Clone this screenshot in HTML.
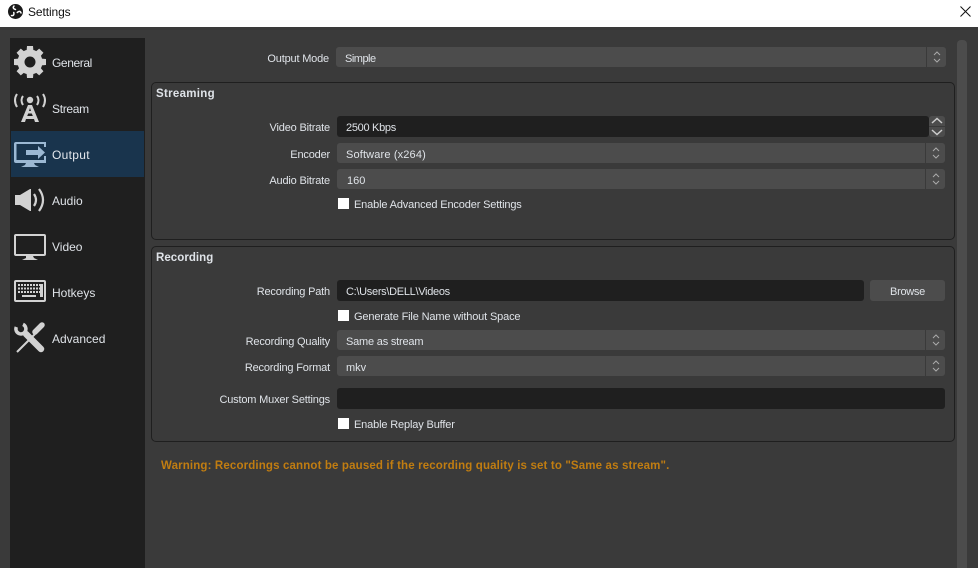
<!DOCTYPE html>
<html><head><meta charset="utf-8"><style>
html,body{margin:0;padding:0}
body{width:978px;height:568px;overflow:hidden;position:relative;background:#3a3a3a;font-family:"Liberation Sans",sans-serif;font-size:11px;color:#dfe3e8}
div{position:absolute;box-sizing:border-box;white-space:nowrap}
svg{position:absolute;overflow:visible}
.l{right:648px;text-align:right;line-height:16px;letter-spacing:-.18px;margin-top:1px}
.sel{background:#4c4c4c;border-radius:3px;height:20px;left:337px;width:608px;line-height:24px;padding-left:9px}
.sel .a{position:absolute;right:0;top:0;width:20px;height:20px;border-left:1px solid #3a3a3a}
.sel svg{left:5px;top:3px}
.inp{background:#1f1f1f;border-radius:3px;line-height:24px;padding-left:9px;height:21px;letter-spacing:-.3px}
.g{left:151px;width:804px;border:1px solid #1f1f1f;border-radius:5px}
.gt{left:156px;font-weight:bold;line-height:16px;font-size:11.5px}
.cb{left:338px;width:11px;height:11px;background:#fff}
.ct{left:354px;line-height:16px;letter-spacing:-.15px;margin-top:1px}
.nav{left:52px;line-height:16px;font-size:12px}
</style></head><body>
<div style="left:0;top:0;width:978px;height:27px;background:#fff"></div>
<svg style="left:7.500px;top:4px" width="15" height="15" viewBox="0 0 15 15"><circle cx="7.500" cy="7.500" r="7.500" fill="#1a1a1a"/><g fill="none" stroke="#fff" stroke-width="1.500" stroke-linecap="round"><path d="M7.500 5.500C5.500 5 4.500 3.500 6 2"/><path d="M7.500 5.500C5.500 5 4.500 3.500 6 2" transform="rotate(120 7.500 7.500)"/><path d="M7.500 5.500C5.500 5 4.500 3.500 6 2" transform="rotate(240 7.500 7.500)"/></g></svg>
<div style="left:28px;top:4px;color:#111;font-size:12px;line-height:16px;letter-spacing:-.1px">Settings</div>
<svg style="left:960px;top:6px" width="11" height="11"><path d="M.5.5l10 10M10.500.5l-10 10" stroke="#111" stroke-width="1" fill="none"/></svg>

<div style="left:10px;top:38px;width:135px;height:530px;background:#1f1f1f"></div>
<div style="left:11px;top:131px;width:133px;height:46px;background:#19344d"></div>

<svg style="left:14px;top:46px" width="32" height="32" viewBox="0 0 32 32"><circle cx="16" cy="16" r="9" fill="none" stroke="#d2d2d2" stroke-width="7"/><g fill="#d2d2d2"><path d="M12.500 6L13 0h6l.5 6z"/><path d="M12.500 6L13 0h6l.5 6z" transform="rotate(45 16 16)"/><path d="M12.500 6L13 0h6l.5 6z" transform="rotate(90 16 16)"/><path d="M12.500 6L13 0h6l.5 6z" transform="rotate(135 16 16)"/><path d="M12.500 6L13 0h6l.5 6z" transform="rotate(180 16 16)"/><path d="M12.500 6L13 0h6l.5 6z" transform="rotate(225 16 16)"/><path d="M12.500 6L13 0h6l.5 6z" transform="rotate(270 16 16)"/><path d="M12.500 6L13 0h6l.5 6z" transform="rotate(315 16 16)"/></g></svg>
<div class="nav" style="top:55px;letter-spacing:-.4px">General</div>

<svg style="left:14px;top:92px" width="32" height="31" viewBox="0 0 32 31"><g fill="none" stroke="#d2d2d2" stroke-width="2"><path d="M9 4q-3 4 0 9M3 2q-4 6 0 13M23 4q3 4 0 9M29 2q4 6 0 13"/></g><circle cx="16" cy="8" r="3.200" fill="#d2d2d2"/><path fill="#d2d2d2" fill-rule="evenodd" d="M14 13h4l7 17h-4l-1-3h-8l-1 3H7zM16 16l-1 3h2zM14.200 21.500l-1 2.500h5.600l-1-2.500z"/></svg>
<div class="nav" style="top:101px;letter-spacing:-.3px">Stream</div>

<svg style="left:14px;top:142px" width="32" height="26" viewBox="0 0 32 26"><path fill="#9cb8d3" d="M2 0h30v5h-2V2H2.500v16H30v-4h2v7H2a2 2 0 0 1-2-2V2a2 2 0 0 1 2-2zM12 21h8l1 2 4 2H7l4-2z"/><path fill="#9cb8d3" d="M12 8h12V4l7 6.500-7 6.500v-4H12z"/></svg>
<div class="nav" style="top:147px;color:#e4e8ee;letter-spacing:.3px">Output</div>

<svg style="left:15px;top:188px" width="30" height="24" viewBox="0 0 30 24"><path fill="#d2d2d2" d="M0 7h5l10-6h1v22h-1L5 17H0z"/><g fill="none" stroke="#d2d2d2" stroke-width="2.200"><path d="M19 6q4 6 0 12M24 1q8 11 0 22"/></g></svg>
<div class="nav" style="top:193px">Audio</div>

<svg style="left:14px;top:234px" width="32" height="26" viewBox="0 0 32 26"><path fill="#d2d2d2" fill-rule="evenodd" d="M2 0h28a2 2 0 0 1 2 2v18a2 2 0 0 1-2 2H2a2 2 0 0 1-2-2V2a2 2 0 0 1 2-2zM2 2v18h28V2zM12 22h7l1 2 4 2H8l4-2z"/></svg>
<div class="nav" style="top:239px">Video</div>

<svg style="left:14px;top:280px" width="32" height="22" viewBox="0 0 32 22"><path fill="#d2d2d2" fill-rule="evenodd" d="M2 0h28a2 2 0 0 1 2 2v18a2 2 0 0 1-2 2H2a2 2 0 0 1-2-2V2a2 2 0 0 1 2-2zM2 2v18h28V2z"/><g stroke="#d2d2d2" stroke-width="2" stroke-dasharray="2 1" fill="none"><path d="M4 5h22M4 8.500h22M4 12h22"/></g><path stroke="#d2d2d2" stroke-width="2" d="M8 16h14"/><path fill="#d2d2d2" d="M26 4h3v13h-3z"/></svg>
<div class="nav" style="top:285px">Hotkeys</div>

<svg style="left:14px;top:322px" width="32" height="33" viewBox="0 0 32 33" fill="none" stroke="#d2d2d2"><path stroke-width="3.500" d="M2.300 5A5 5 0 1 0 9 2.400"/><path stroke-width="6.500" stroke-linecap="round" d="M12 12l15 15"/><path stroke-width="5.500" stroke-linecap="round" d="M21 10l7-7"/><path stroke-width="2" d="M21 12L3 30"/></svg>
<div class="nav" style="top:331px">Advanced</div>

<div style="left:957px;top:40px;width:10px;height:528px;background:#4c4c4c;border-radius:4px 4px 0 0"></div>

<div class="l" style="top:50px;right:649px">Output Mode</div>
<div class="sel" style="left:336px;width:610px;top:47px;letter-spacing:-.5px">Simple<div class="a"><svg width="10" height="14"><path d="M2 5l3-3 3 3M2 9l3 3 3-3" fill="none" stroke="#aaa"/></svg></div></div>

<div class="g" style="top:82px;height:158px"></div>
<div class="gt" style="top:86px;letter-spacing:.3px">Streaming</div>
<div class="l" style="top:119px">Video Bitrate</div>
<div class="inp" style="left:337px;top:116px;width:592px">2500 Kbps</div>
<div style="left:929px;top:116px;width:16px;height:10px;background:#4c4c4c;border-radius:3px 3px 0 0"></div>
<div style="left:929px;top:127px;width:16px;height:10px;background:#4c4c4c;border-radius:0 0 3px 3px"></div>
<svg style="left:929px;top:116px" width="16" height="21"><path d="M3 7l5-4.500L13 7M3 14l5 4.500L13 14" fill="none" stroke="#ccc" stroke-width="1.500"/></svg>
<div class="l" style="top:146px">Encoder</div>
<div class="sel" style="top:143px;letter-spacing:.15px">Software (x264)<div class="a"><svg width="10" height="14"><path d="M2 5l3-3 3 3M2 9l3 3 3-3" fill="none" stroke="#aaa"/></svg></div></div>
<div class="l" style="top:172px">Audio Bitrate</div>
<div class="sel" style="top:169px;padding-left:10px">160<div class="a"><svg width="10" height="14"><path d="M2 5l3-3 3 3M2 9l3 3 3-3" fill="none" stroke="#aaa"/></svg></div></div>
<div class="cb" style="top:198px"></div>
<div class="ct" style="top:196px">Enable Advanced Encoder Settings</div>

<div class="g" style="top:246px;height:196px"></div>
<div class="gt" style="top:250px;letter-spacing:.05px">Recording</div>
<div class="l" style="top:283px">Recording Path</div>
<div class="inp" style="left:337px;top:280px;width:527px">C:\Users\DELL\Videos</div>
<div style="left:870px;top:280px;width:75px;height:21px;background:#4c4c4c;border-radius:3px;text-align:center;line-height:24px;letter-spacing:-.3px">Browse</div>
<div class="cb" style="top:310px"></div>
<div class="ct" style="top:308px">Generate File Name without Space</div>
<div class="l" style="top:333px">Recording Quality</div>
<div class="sel" style="top:330px;letter-spacing:-.2px">Same as stream<div class="a"><svg width="10" height="14"><path d="M2 5l3-3 3 3M2 9l3 3 3-3" fill="none" stroke="#aaa"/></svg></div></div>
<div class="l" style="top:359px">Recording Format</div>
<div class="sel" style="top:356px">mkv<div class="a"><svg width="10" height="14"><path d="M2 5l3-3 3 3M2 9l3 3 3-3" fill="none" stroke="#aaa"/></svg></div></div>
<div class="l" style="top:391px">Custom Muxer Settings</div>
<div class="inp" style="left:337px;top:388px;width:608px"></div>
<div class="cb" style="top:418px"></div>
<div class="ct" style="top:416px">Enable Replay Buffer</div>

<div style="left:161px;top:458px;line-height:16px;font-weight:bold;color:#c17d11;font-size:11.5px;letter-spacing:.146px">Warning: Recordings cannot be paused if the recording quality is set to "Same as stream".</div>
</body></html>
